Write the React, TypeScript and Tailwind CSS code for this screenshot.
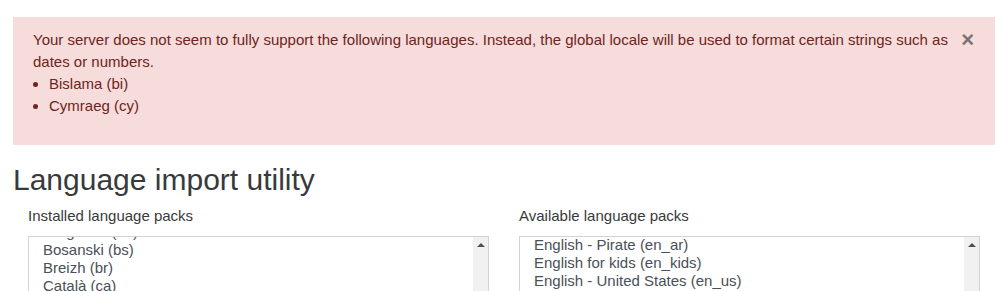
const installed = ["Aragonés (an)", "Bosanski (bs)", "Breizh (br)", "Català (ca)", "Čeština (cs)"];
const available = ["English - Pirate (en_ar)", "English for kids (en_kids)", "English - United States (en_us)", "Español - Internacional (es)"];

function PackList({ title, items, offset }: { title: string; items: string[]; offset: string }) {
  return (
    <div className="px-[15px]">
      <label className="block text-[15px] leading-[22px] text-[#373a3c] mb-[9px]">{title}</label>
      <div className="flex h-[80px] border border-[#ced4da] bg-white overflow-hidden">
        <div className={`flex-1 pl-[14px] ${offset}`}>
          {items.map((it) => (
            <div key={it} className="text-[15px] leading-[18px] text-[#495057] whitespace-nowrap">
              {it}
            </div>
          ))}
        </div>
        <div className="w-[15px] bg-[#f1f1f1] flex justify-center pt-[6px]">
          <div className="w-0 h-0 border-l-[4px] border-r-[4px] border-b-[4px] border-l-transparent border-r-transparent border-b-[#505050]" />
        </div>
      </div>
    </div>
  );
}

export default function App() {
  return (
    <div className="bg-white min-h-screen px-[13px] pt-[17px] font-['Liberation_Sans',Arial,sans-serif] w-[1003px]">
      <div className="relative w-[982px] bg-[#f7dcdc] text-[#6e2420] text-[15px] leading-[22px] pl-[20px] pr-[40px] pt-[12px] pb-[28px]">
        <p>
          Your server does not seem to fully support the following languages. Instead, the global locale will be used to format certain strings such as dates or numbers.
        </p>
        <ul className="list-disc pl-4">
          <li>Bislama (bi)</li>
          <li>Cymraeg (cy)</li>
        </ul>
        <button className="absolute right-[21px] top-[12px] text-[22px] leading-[22px] font-bold text-[#7d7272]">
          ×
        </button>
      </div>
      <h2 className="mt-[17px] text-[30px] leading-[36px] text-[#373a3c] font-normal">Language import utility</h2>
      <div className="grid grid-cols-2 w-[982px] mt-[7px]">
        <PackList title="Installed language packs" items={installed} offset="-mt-[14px]" />
        <PackList title="Available language packs" items={available} offset="-mt-[1px]" />
      </div>
    </div>
  );
}
